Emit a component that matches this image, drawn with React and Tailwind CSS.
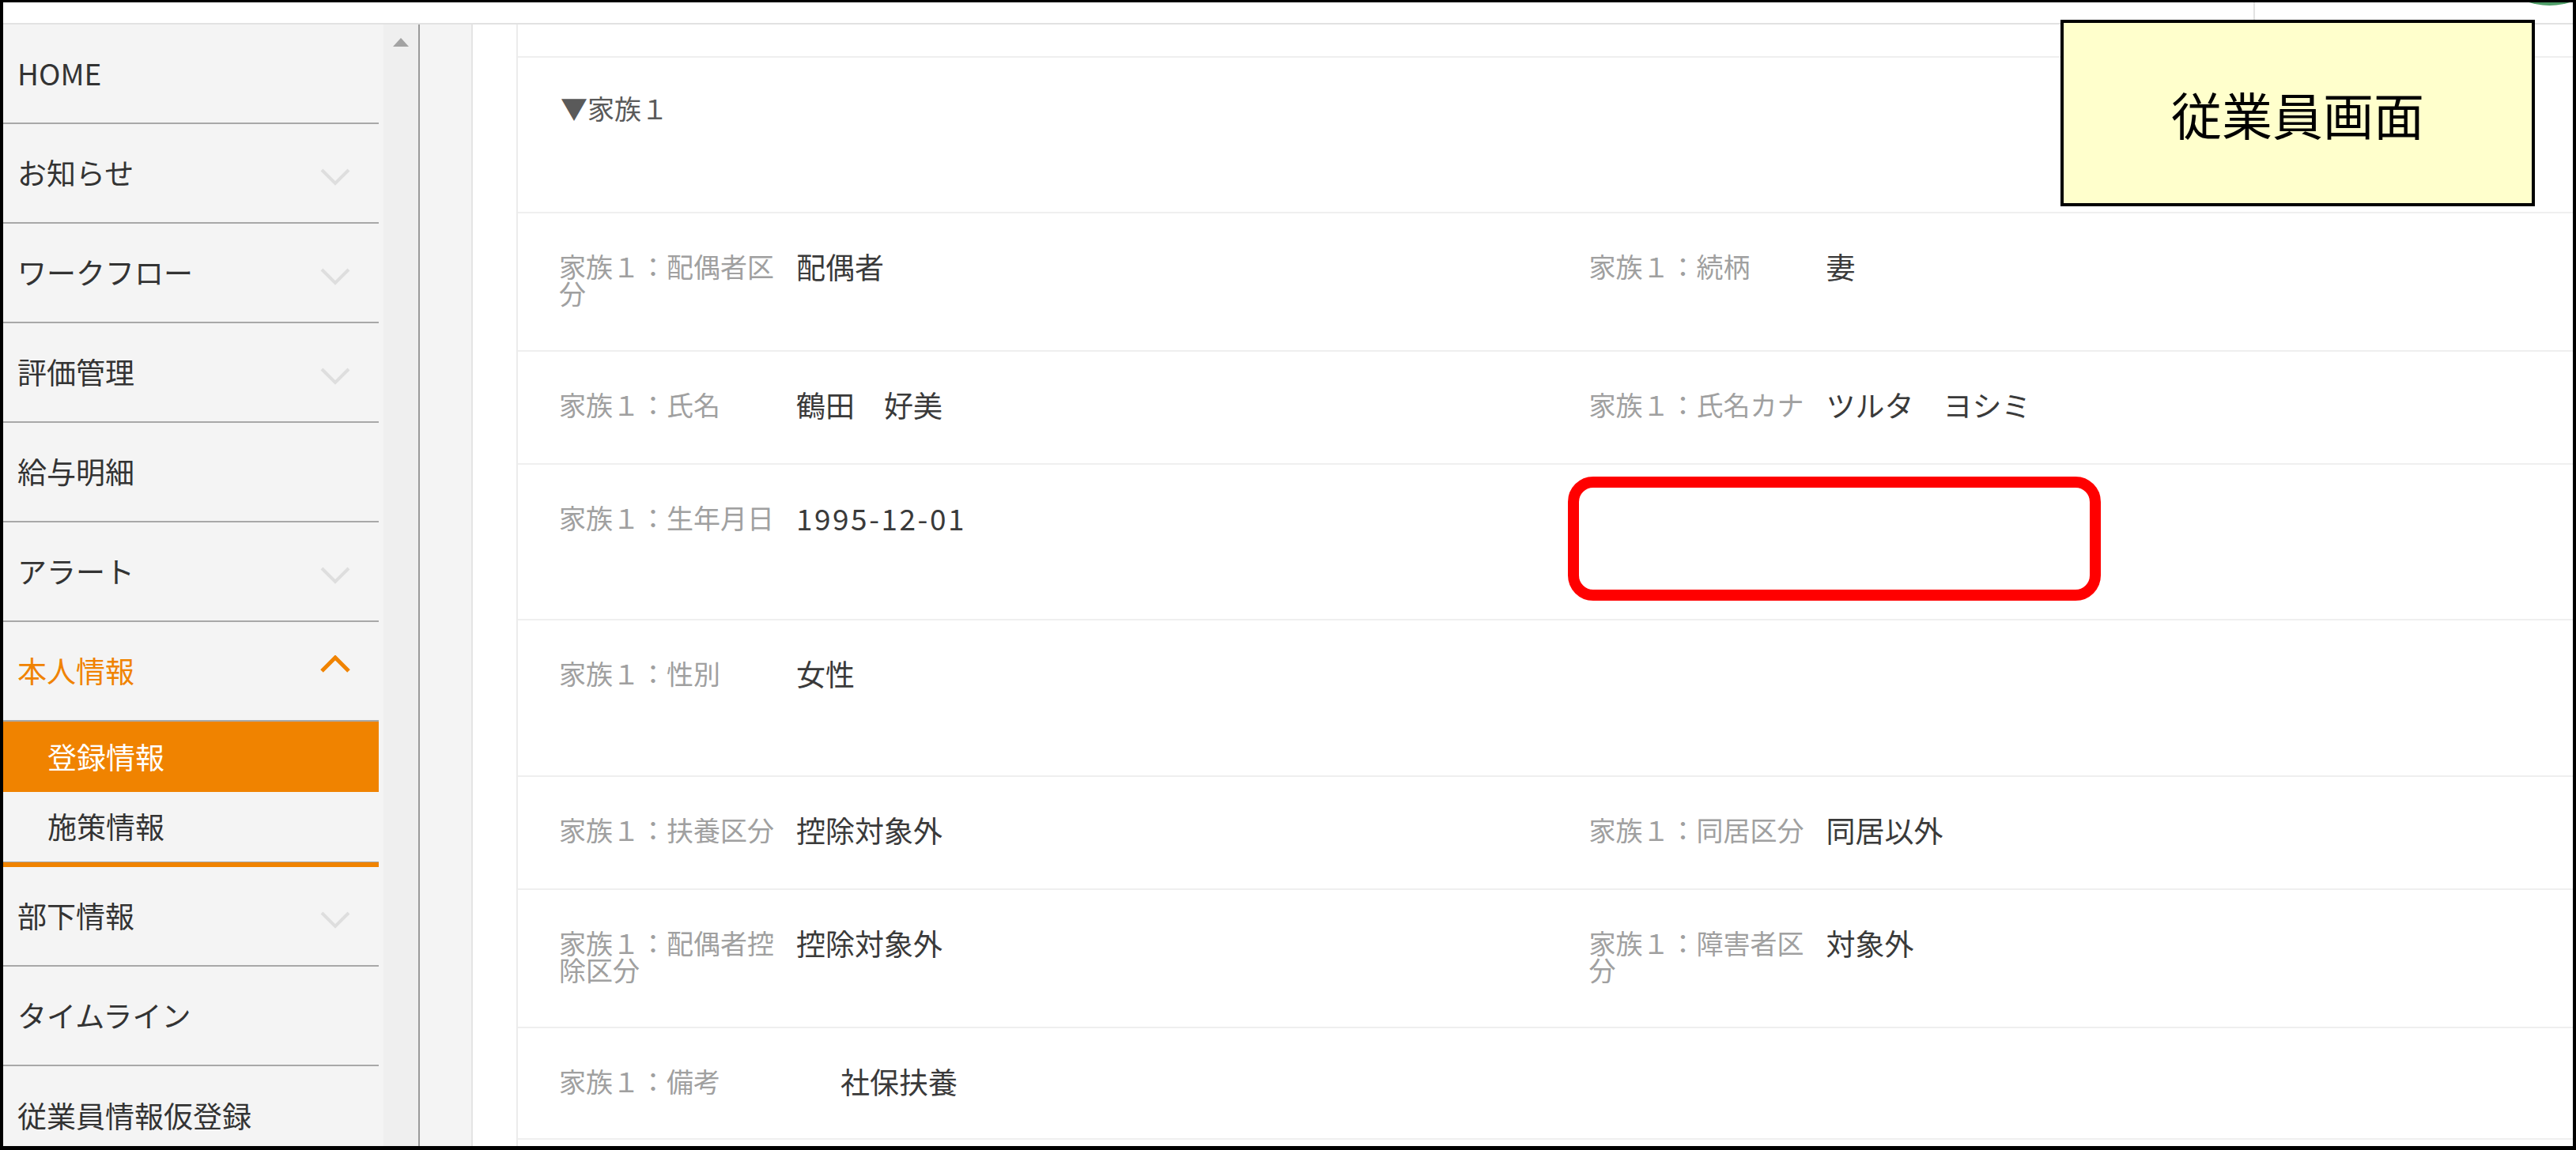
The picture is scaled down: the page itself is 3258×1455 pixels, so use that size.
import React from 'react';

const FONT = "font-['Noto_Sans_CJK_JP','Noto_Sans',sans-serif]";

function ChevronDown() {
  return (
    <svg width="38" height="22" viewBox="0 0 38 22" className="mt-[10px]">
      <path d="M2 2 L19 19 L36 2" fill="none" stroke="#dedede" strokeWidth="4" />
    </svg>
  );
}

function ChevronUp() {
  return (
    <svg width="38" height="23" viewBox="0 0 38 23" className="mb-[18px]">
      <path d="M2 20 L19 3 L36 20" fill="none" stroke="#f08300" strokeWidth="5" />
    </svg>
  );
}

function NavItem({ label, chev, active, last }) {
  return (
    <div
      className={
        'h-[126px] shrink-0 flex items-center justify-between pl-[18px] pr-[36px] text-[37px] ' +
        (last ? '' : 'border-b-2 border-[#a8a8a8] ') +
        (active ? 'text-[#f08300]' : 'text-[#333333]')
      }
    >
      <span>{label}</span>
      {chev === 'down' && <ChevronDown />}
      {chev === 'up' && <ChevronUp />}
    </div>
  );
}

function Cell({ label, value, className, valueClass }) {
  return (
    <div className={'flex items-start pt-[50px] ' + className}>
      <div className="w-[300px] shrink-0 text-[34px] leading-[34px] text-[#a0a0a0]">{label}</div>
      <div className={'text-[37px] leading-[35px] text-[#3a3a3a] ' + (valueClass || '')}>{value}</div>
    </div>
  );
}

const rows = [
  { h: 'h-[175px]', left: ['家族１：配偶者区分', '配偶者'], right: ['家族１：続柄', '妻'] },
  { h: 'h-[143px]', left: ['家族１：氏名', '鶴田　好美'], right: ['家族１：氏名カナ', 'ツルタ　ヨシミ'] },
  { h: 'h-[197px]', left: ['家族１：生年月日', '1995-12-01'], right: null, lv: 'tracking-[2.5px]' },
  { h: 'h-[198px]', left: ['家族１：性別', '女性'], right: null },
  { h: 'h-[143px]', left: ['家族１：扶養区分', '控除対象外'], right: ['家族１：同居区分', '同居以外'] },
  { h: 'h-[175px]', left: ['家族１：配偶者控除区分', '控除対象外'], right: ['家族１：障害者区分', '対象外'] },
  { h: 'h-[141px]', left: ['家族１：備考', '社保扶養'], right: null, lv: 'ml-[56px]' },
];

export default function App() {
  return (
    <div
      className={
        'relative w-[3258px] h-[1455px] overflow-hidden bg-white border-black border-l-4 border-r-4 border-t-[3px] border-b-[5px] flex flex-col ' +
        FONT
      }
    >
      {/* top strip */}
      <div className="h-[28px] shrink-0 border-b-2 border-[#e2e2e2] flex">
        <div className="w-[2846px]" />
        <div className="w-[2px] bg-[#e2e2e2]" />
      </div>

      {/* body */}
      <div className="flex flex-1 min-h-0 overflow-hidden">
        {/* sidebar nav */}
        <div className="w-[475px] shrink-0 bg-[#f4f4f4] flex flex-col overflow-hidden">
          <NavItem label="HOME" />
          <NavItem label="お知らせ" chev="down" />
          <NavItem label="ワークフロー" chev="down" />
          <NavItem label="評価管理" chev="down" />
          <NavItem label="給与明細" />
          <NavItem label="アラート" chev="down" />
          <NavItem label="本人情報" chev="up" active />
          <div className="h-[89px] shrink-0 bg-[#f08300] flex items-center pl-[56px] text-[37px] text-white">登録情報</div>
          <div className="h-[88px] shrink-0 flex items-center pl-[56px] text-[37px] text-[#333333]">施策情報</div>
          <div className="h-[1px] shrink-0 bg-[#a8a8a8]" />
          <div className="h-[6px] shrink-0 bg-[#f08300]" />
          <NavItem label="部下情報" chev="down" />
          <NavItem label="タイムライン" />
          <NavItem label="従業員情報仮登録" last />
        </div>
        <div className="w-[6px] shrink-0 bg-[#f4f4f4]" />
        {/* scroll track */}
        <div className="w-[44px] shrink-0 bg-[#efefef] flex justify-center pt-[17px]">
          <svg width="20" height="11" viewBox="0 0 20 11">
            <path d="M10 0 L20 11 L0 11 Z" fill="#a3a3a3" />
          </svg>
        </div>
        <div className="w-[2px] shrink-0 bg-[#9a9a9a]" />
        <div className="w-[65px] shrink-0 bg-[#f4f4f4]" />
        <div className="w-[2px] shrink-0 bg-[#e4e4e4]" />
        <div className="w-[55px] shrink-0 bg-white" />

        {/* content card */}
        <div className="flex-1 border-l-2 border-[#ececec] flex flex-col overflow-hidden">
          <div className="h-[42px] shrink-0 border-b-2 border-[#efefef]" />
          <div className="h-[197px] shrink-0 border-b-2 border-[#efefef] pt-[46px] pl-[54px] text-[34px] leading-[35px] text-[#5a5a5a]">
            ▼家族１
          </div>
          {rows.map((r, i) => (
            <div key={i} className={r.h + ' shrink-0 border-b-2 border-[#efefef] grid grid-cols-2'}>
              <Cell label={r.left[0]} value={r.left[1]} className="pl-[52px]" valueClass={r.lv || ''} />
              {r.right ? (
                <Cell label={r.right[0]} value={r.right[1]} className="pl-[55px]" />
              ) : (
                <div />
              )}
            </div>
          ))}
        </div>
      </div>

      {/* green bubble peeking at top right */}
      <div className="absolute left-[3134px] top-[-169px] w-[173px] h-[173px] rounded-full bg-[#4f9e68]" />

      {/* annotation: yellow label */}
      <div className="absolute left-[2602px] top-[22px] w-[600px] h-[236px] border-4 border-black bg-[#ffffcc] flex items-center justify-center text-[64px] text-black">
        従業員画面
      </div>

      {/* annotation: red rounded box */}
      <div className="absolute left-[1979px] top-[600px] w-[674px] h-[157px] border-[14px] border-[#ff0000] rounded-[32px]" />
    </div>
  );
}
